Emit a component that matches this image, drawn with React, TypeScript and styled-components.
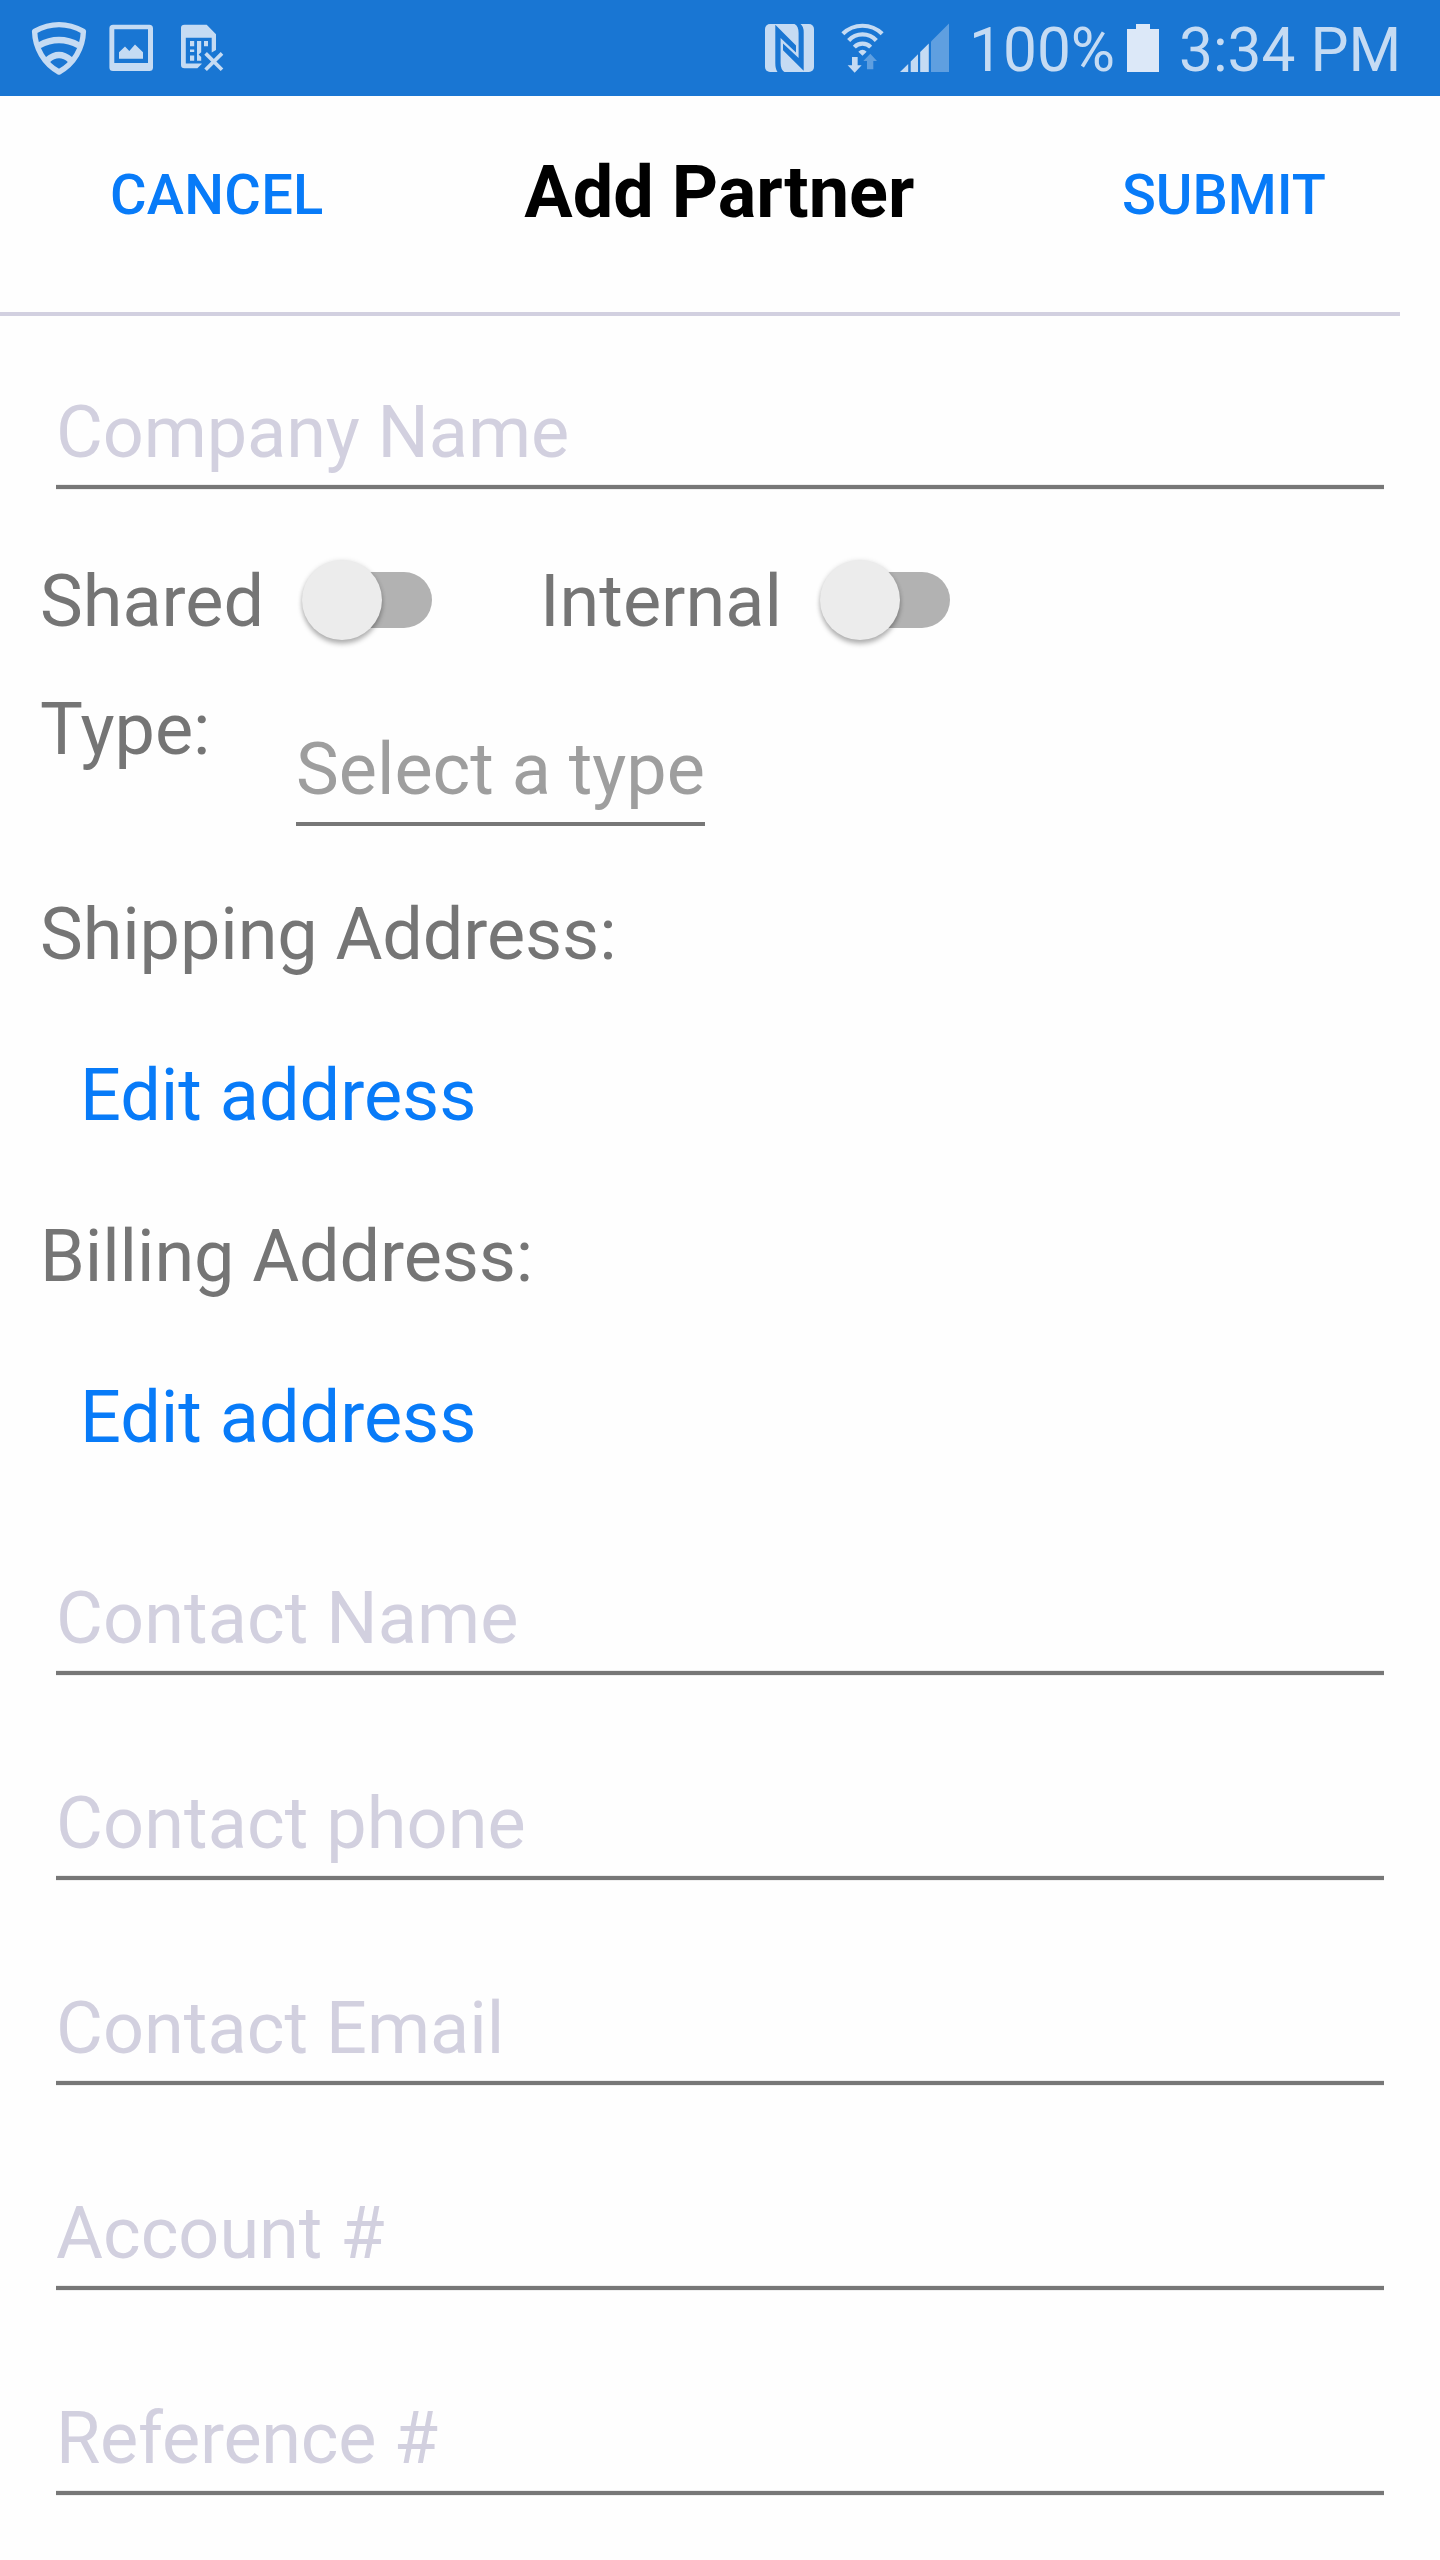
import React from "react";
import styled, { createGlobalStyle } from "styled-components";

const GlobalStyle = createGlobalStyle`
  * { box-sizing: border-box; }
  html, body { margin: 0; padding: 0; background: #fefefe; }
  body { font-family: Roboto, "Liberation Sans", sans-serif; }
`;

const TINT = "#c5dbf3";
const TINT_DIM = "#5f9fe0";
const BAR = "#1976d3";

const Screen = styled.main`
  display: flex;
  flex-direction: column;
  width: 1440px;
  height: 2560px;
  overflow: hidden;
  background: #fefefe;
`;

const StatusBar = styled.div`
  display: flex;
  justify-content: space-between;
  align-items: flex-start;
  height: 96px;
  flex: none;
  padding: 20px 40px 0 30px;
  background: ${BAR};
`;

const StatusGroup = styled.div`
  display: flex;
  align-items: flex-start;
`;

const StatusIcon = styled.svg<{ $before?: number }>`
  display: block;
  flex: none;
  margin-left: ${(p) => p.$before ?? 0}px;
`;

const StatusText = styled.span<{ $before: number; $width: number }>`
  flex: none;
  width: ${(p) => p.$width}px;
  margin: -4px 0 0 ${(p) => p.$before}px;
  font-size: 60.4px;
  line-height: 70px;
  color: ${TINT};
  white-space: nowrap;
`;

const Header = styled.header`
  display: flex;
  align-items: flex-start;
  justify-content: space-between;
  flex: none;
  width: 1400px;
  height: 220px;
  padding: 54px 74px 0 110px;
  border-bottom: 4px solid #d2d0e0;
`;

const HeaderButton = styled.button<{ $tracking?: number }>`
  margin: 12px 0 0;
  padding: 0;
  border: 0;
  background: none;
  font: 500 56px/66px Roboto, "Liberation Sans", sans-serif;
  letter-spacing: ${(p) => p.$tracking ?? 0}px;
  color: #087bf8;
`;

const Title = styled.h1`
  margin: 0 7px 0 0;
  font-size: 72px;
  line-height: 86px;
  font-weight: 700;
  color: #000;
  white-space: nowrap;
`;

const Form = styled.form`
  display: flex;
  flex-direction: column;
  padding-top: 74px;
`;

const Text = styled.span<{ $color?: string; $tracking?: number }>`
  font-size: 72px;
  line-height: 86px;
  letter-spacing: ${(p) => p.$tracking ?? 0}px;
  color: ${(p) => p.$color ?? "#757575"};
  white-space: nowrap;
`;

const Field = styled.div`
  display: flex;
  flex-direction: column;
  gap: 8px;
  margin: 0 56px;
`;

const Underline = styled.div`
  height: 6px;
  background: linear-gradient(#ededed 1px, #777 1px 5px, #efefef 5px);
`;

const Switches = styled.div`
  display: flex;
  align-items: center;
  height: 86px;
  margin: 69px 0 0 40px;
`;

const SwitchItem = styled.div<{ $width: number; $before: number }>`
  display: flex;
  align-items: center;
  justify-content: space-between;
  width: ${(p) => p.$width}px;
  margin-left: ${(p) => p.$before}px;
`;

const Track = styled.div`
  display: flex;
  align-items: center;
  width: 120px;
  height: 56px;
  margin-bottom: 5px;
  border-radius: 28px;
  background: #b2b2b2;
`;

const Thumb = styled.div`
  flex: none;
  width: 80px;
  height: 80px;
  margin-left: -10px;
  border-radius: 50%;
  background: #ececec;
  box-shadow: 0 4px 5px rgba(0, 0, 0, 0.28), 0 0 5px rgba(0, 0, 0, 0.1);
`;

const TypeRow = styled.div`
  display: flex;
  align-items: flex-start;
  justify-content: space-between;
  width: 665px;
  height: 139px;
  margin: 42px 0 0 40px;
`;

const Select = styled.div`
  display: flex;
  flex-direction: column;
  width: 409px;
  margin-top: 40px;
  padding-bottom: 9px;
  border-bottom: 4px solid #777;
`;

const Addresses = styled.div`
  display: grid;
  grid-auto-rows: 86px;
  row-gap: 75px;
  margin: 66px 0 0 40px;
`;

const EditLink = styled(Text)`
  padding-left: 40px;
`;

const Contacts = styled.div`
  display: flex;
  flex-direction: column;
  gap: 105px;
  margin-top: 115px;
`;

function ShieldIcon() {
  return (
    <StatusIcon width="58" height="58" viewBox="30 20 58 58" fill="none" stroke={TINT} strokeWidth="5.4" strokeLinejoin="round">
      <path d="M34.6 31.3Q59 18 83.4 31.3C83 48 74 64 59 72C44 64 35 48 34.6 31.3Z" />
      <path d="M39 45.5Q59 34.5 79 45.5" strokeWidth="6.2" />
      <path d="M47.5 60Q59 50 70.5 60" strokeWidth="6.4" />
    </StatusIcon>
  );
}

function PictureIcon() {
  return (
    <StatusIcon $before={19} width="48" height="58" viewBox="107 20 48 58" fill={TINT}>
      <path fillRule="evenodd" d="M113 24.7H149.3Q153 24.7 153 28.4V67.5Q153 71 149.3 71H113Q109.4 71 109.4 67.5V28.4Q109.4 24.7 113 24.7ZM114.3 29.2V63H148V29.2Z" />
      <path d="M119 58.8V52.3L125 46.6L129.3 51L135 44.6L143 52.3V58.8Z" />
    </StatusIcon>
  );
}

function SimIcon() {
  return (
    <StatusIcon $before={24} width="48" height="58" viewBox="179 20 48 58" fill={TINT}>
      <path fillRule="evenodd" d="M184.5 24.7H206.7L216 34.2V50L211.7 52.5V37.8H185.8V63.4H201.7V64L197.4 68.2H184.5Q181 68.2 181 65V28Q181 24.7 184.5 24.7Z" />
      <path d="M190 41h4.2v5.2H190zM190 49.6h4.2v2.4H190zM190 55.4h4.2v5.4H190zM197 41h4.2v11.3L198.6 54.5L201.2 57V60.8H197zM204 41h4v5.2h-4z" />
      <path d="M205.6 53.4L222 69.8M222 53.4L205.6 69.8" stroke={TINT} strokeWidth="3.7" />
    </StatusIcon>
  );
}

function NfcIcon() {
  return (
    <StatusIcon width="53" height="58" viewBox="763 20 53 58">
      <rect x="765" y="24" width="49" height="48" rx="5" fill={TINT} />
      <g fill={BAR}>
        <path d="M775.3 24.8L796 45.6V52.6L780.6 38V63Q780.6 69.5 784.5 72.1H777.5Q775.3 69 775.3 63Z" />
        <path d="M783 43.6L798.6 58V33Q798.6 26 794.5 23.9H800.5Q803.7 26.5 803.7 32V70.8L783 50.3Z" />
      </g>
    </StatusIcon>
  );
}

function WifiIcon() {
  return (
    <StatusIcon $before={23} width="48" height="58" viewBox="839 20 48 58">
      <g transform="translate(740 0) scale(.3333)">
        <g fill="none" stroke={TINT} strokeWidth="12.5">
          <path d="M308.5 101.5A84 84 0 0 1 426.5 101.5" />
          <path d="M326 121.5A56 56 0 0 1 409 121.5" />
          <path d="M343 141.5A34 34 0 0 1 392 141.5" />
        </g>
        <path d="M355 155Q367.5 144 380 155L367.5 167Z" fill={TINT} />
        <path d="M336 171H353V196H365L344 218L323 196H336Z" fill={TINT} />
        <path d="M391 161L411 183H400V208H381V183H370Z" fill={TINT_DIM} />
      </g>
    </StatusIcon>
  );
}

function SignalIcon() {
  return (
    <StatusIcon $before={11} width="52" height="58" viewBox="898 20 52 58" fill={TINT}>
      <path d="M900 72L908.2 64V72ZM910.7 61.5L918 54.3V72H910.7ZM920.2 52L928.8 43.6V72H920.2Z" />
      <path d="M931 41.4L949 23.4V72H931Z" fill={TINT_DIM} />
    </StatusIcon>
  );
}

function BatteryIcon() {
  return (
    <StatusIcon width="34" height="58" viewBox="1126 20 34 58" fill="#dce8f8">
      <path d="M1136 24H1150V29H1159V72H1127V29H1136Z" />
    </StatusIcon>
  );
}

function SwitchControl({ label, width, before = 0 }: { label: string; width: number; before?: number }) {
  return (
    <SwitchItem $width={width} $before={before}>
      <Text>{label}</Text>
      <Track role="switch" aria-checked={false}>
        <Thumb />
      </Track>
    </SwitchItem>
  );
}

function TextField({ hint, tracking }: { hint: string; tracking?: number }) {
  return (
    <Field>
      <Text $color="#d2d0df" $tracking={tracking}>{hint}</Text>
      <Underline />
    </Field>
  );
}

const contactFields = [
  { hint: "Contact Name", tracking: 0.1 },
  { hint: "Contact phone", tracking: 0.1 },
  { hint: "Contact Email", tracking: 0.05 },
  { hint: "Account #", tracking: 0 },
  { hint: "Reference #", tracking: -0.25 },
];

export default function App() {
  return (
    <Screen>
      <GlobalStyle />
      <StatusBar>
        <StatusGroup>
          <ShieldIcon />
          <PictureIcon />
          <SimIcon />
        </StatusGroup>
        <StatusGroup>
          <NfcIcon />
          <WifiIcon />
          <SignalIcon />
          <StatusText $before={19} $width={157}>100%</StatusText>
          <BatteryIcon />
          <StatusText $before={19} $width={221}>3:34 PM</StatusText>
        </StatusGroup>
      </StatusBar>
      <Header>
        <HeaderButton type="button" $tracking={0.3}>CANCEL</HeaderButton>
        <Title>Add Partner</Title>
        <HeaderButton type="button">SUBMIT</HeaderButton>
      </Header>
      <Form>
        <TextField hint="Company Name" tracking={-0.1} />
        <Switches>
          <SwitchControl label="Shared" width={392} />
          <SwitchControl label="Internal" width={410} before={108} />
        </Switches>
        <TypeRow>
          <Text>Type:</Text>
          <Select>
            <Text $color="#9e9e9e">Select a type</Text>
          </Select>
        </TypeRow>
        <Addresses>
          <Text $tracking={-0.1}>Shipping Address:</Text>
          <EditLink $color="#087bf8">Edit address</EditLink>
          <Text $tracking={-0.1}>Billing Address:</Text>
          <EditLink $color="#087bf8">Edit address</EditLink>
        </Addresses>
        <Contacts>
          {contactFields.map((field) => (
            <TextField key={field.hint} {...field} />
          ))}
        </Contacts>
      </Form>
    </Screen>
  );
}
